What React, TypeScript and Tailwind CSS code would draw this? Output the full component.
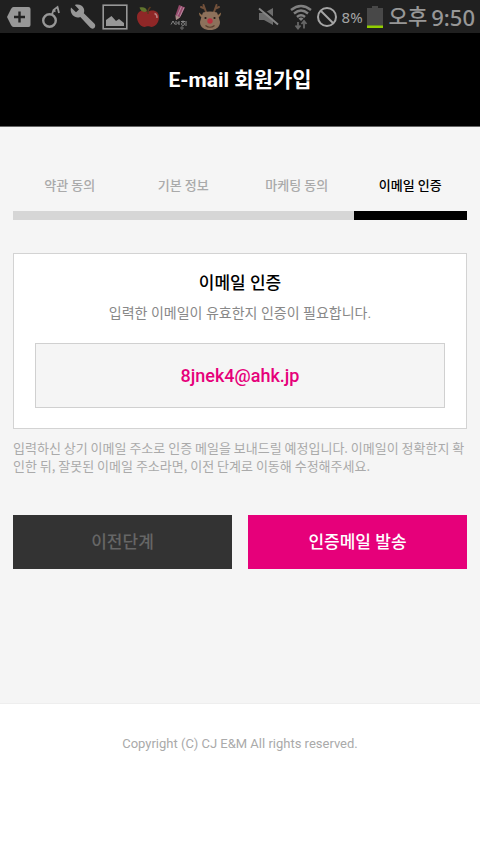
import React from "react";

const steps = [
  { label: "약관 동의", active: false },
  { label: "기본 정보", active: false },
  { label: "마케팅 동의", active: false },
  { label: "이메일 인증", active: true },
];

function NotificationIcons() {
  return (
    <div className="flex items-center">
      <svg className="ml-1.5 shrink-0" width="26" height="24" viewBox="0 0 26 24" aria-hidden="true">
        <path d="M7.5 2h15a2 2 0 0 1 2 2v16a2 2 0 0 1-2 2h-15Q6 22 5 20L1 12 5 4Q6 2 7.5 2z" fill="#979797" />
        <path d="M13.5 6.500v11M8 12h11" stroke="#222" strokeWidth="2.4" />
      </svg>
      <svg className="ml-2 shrink-0" width="22" height="24" viewBox="0 0 22 24" aria-hidden="true">
        <circle cx="9.5" cy="15.5" r="6.3" fill="none" stroke="#979797" strokeWidth="2.4" />
        <path d="M12 9.5l1.500-4.500 4-3 1.500 6M13.500 5.500l2 1" fill="none" stroke="#979797" strokeWidth="1.8" />
      </svg>
      <svg className="ml-2 shrink-0" width="26" height="26" viewBox="0 0 26 26" aria-hidden="true">
        <path d="M1 3.5l5 4.7 3-2.8L4.800 1C8-.1 12.500.8 13.800 4.500c.6 1.700.5 3.300 0 4.700l10.500 10.300c1.300 1.300 1.200 3.200 0 4.400s-3 1-4.200-.3L10.300 13C4.600 15.300-.7 9.700 1 3.500z" fill="#979797" />
      </svg>
      <svg className="ml-1.5 shrink-0" width="26" height="26" viewBox="0 0 26 26" aria-hidden="true">
        <rect x="1.2" y="1.2" width="23.6" height="23.6" fill="none" stroke="#979797" strokeWidth="1.6" />
        <path d="M4 22v-6l5.500-4 4.500 5 3-2 5 4v3z" fill="#979797" />
      </svg>
      <svg className="ml-2 shrink-0" width="24" height="22" viewBox="0 0 24 22" aria-hidden="true">
        <path d="M12 6c4-3 11-1.500 11 5s-4.500 10-7.500 10c-1.500 0-2-.7-3.500-.7s-2 .7-3.500.7C5.500 21 1 17 1 11s6-8.500 11-5z" fill="#8f2727" />
        <path d="M11 5C8 7 4.500 5.500 3.500 1.500 7.500.5 10.500 1.500 11 5z" fill="#60742d" />
        <path d="M12 8Q11.500 3.500 14.500 1" fill="none" stroke="#5a3a20" strokeWidth="1.6" />
        <path d="M18.500 7.500q2.800 1 2.500 4.500" fill="none" stroke="#b98080" strokeWidth="1.500" />
      </svg>
      <svg className="ml-2.5 shrink-0" width="18" height="26" viewBox="0 0 18 26" aria-hidden="true">
        <path d="M9 1l6 2.500-5 10-4 2.500-.5-5z" fill="#94486a" />
        <path d="M11.500 2.500l-4 9M14 3.500l-4 9" stroke="#c2a0b0" strokeWidth=".8" />
        <path d="M5.500 11l4.500 2.500-4 2.500z" fill="#a58f87" />
        <path d="M1 20.500l2-3.500 2 3.500M6 17v4M9 17v4M7 19h2M11 17.500h4M13 16.500v1M16 17v5" fill="none" stroke="#858585" />
        <circle cx="13" cy="20" r="1.500" fill="none" stroke="#858585" strokeWidth=".9" />
        <circle cx="12" cy="24" r="1.200" fill="none" stroke="#858585" strokeWidth=".8" />
      </svg>
      <svg className="ml-2.5 shrink-0" width="24" height="28" viewBox="0 0 24 28" aria-hidden="true">
        <path d="M8 9L5.500 2M6.500 5.500L3 4M16 9l2.500-7M17.500 5.500l3.500-1.500" stroke="#71503a" strokeWidth="2" fill="none" strokeLinecap="round" />
        <path d="M4 12L1 9.500q0 4 3 5zM20 12l3-2.500q0 4-3 5z" fill="#8d6b4b" />
        <path d="M5 9.500Q12 7.500 19 9.500 20.500 13 22 19c0 5.500-4.500 8-10 8S2 24.500 2 19Q3.500 13 5 9.500z" fill="#8d715b" />
        <circle cx="7.500" cy="15" r="1.100" fill="#271d1a" />
        <circle cx="16.500" cy="15" r="1.100" fill="#271d1a" />
        <circle cx="12" cy="18" r="2.700" fill="#b9313f" />
        <path d="M7.500 22.500q4.500 3.500 9 0" stroke="#573e2d" strokeWidth="1.200" fill="none" />
      </svg>
    </div>
  );
}

function SystemIcons() {
  return (
    <div className="flex items-center">
      <svg className="shrink-0" width="22" height="20" viewBox="0 0 22 20" aria-hidden="true">
        <path d="M1 6h5l9-5v17l-9-5H1z" fill="#6c6c6c" />
        <path d="M2.500.5L21.500 16" stroke="#202020" strokeWidth="2" />
        <path d="M1 1.500L20 17.500" stroke="#858585" strokeWidth="2" />
      </svg>
      <svg className="ml-2.5 shrink-0" width="22" height="26" viewBox="0 0 22 26" aria-hidden="true">
        <path d="M1 6q10-8 20 0M4 9.500q7-6 14 0M7 13q4-3.500 8 0" fill="none" stroke="#808080" strokeWidth="2.400" />
        <path d="M8.500 14.500q2.500-2 5 0L11 17z" fill="#808080" />
        <path d="M8 18v6M5.500 21.500L8 24.500l2.500-3M14 24.500v-7M11.500 20l2.500-3 2.500 3" fill="none" stroke="#666" strokeWidth="1.800" />
      </svg>
      <svg className="ml-1 shrink-0" width="22" height="22" viewBox="0 0 22 22" aria-hidden="true">
        <circle cx="11" cy="11" r="9" fill="none" stroke="#a5a5a5" strokeWidth="2" />
        <path d="M4.500 4.500l13 13" stroke="#a5a5a5" strokeWidth="2" />
      </svg>
      <span className="ml-1 font-['Noto_Sans',sans-serif] text-[15px] leading-5 text-[#a5a5a5]">8%</span>
      <svg className="ml-1 shrink-0" width="16" height="24" viewBox="0 0 16 24" aria-hidden="true">
        <path d="M5 1h6v2h5v20H0V3h5z" fill="#484848" />
        <path d="M0 20.500h16V23H0z" fill="#91ce00" />
      </svg>
      <span className="ml-1.5 text-[21px] leading-8 font-medium text-[#979797]">오후</span>
      <span className="ml-1 font-['Noto_Sans',sans-serif] text-[22px] leading-8 font-medium text-[#979797]">9:50</span>
    </div>
  );
}

export default function App() {
  return (
    <div className="flex min-h-screen flex-col bg-[#f5f5f5] font-[Roboto,'Noto_Sans_CJK_KR',sans-serif]">
      <div className="flex h-[33px] items-center justify-between bg-[#202020] pr-[5px] whitespace-nowrap">
        <NotificationIcons />
        <SystemIcons />
      </div>

      <header className="flex h-[94px] items-center justify-center border-b border-[#666] bg-black">
        <h1 className="text-[21px] leading-7 font-bold text-white">E-mail 회원가입</h1>
      </header>

      <main className="flex flex-col px-[13px] pb-[134px]">
        <ol className="mt-[49px] grid grid-cols-4 text-center text-[13px] leading-5">
          {steps.map((step) => (
            <li
              key={step.label}
              aria-current={step.active ? "step" : undefined}
              className={
                step.active
                  ? "border-b-[9px] border-black pb-[15px] font-medium text-black"
                  : "border-b-[9px] border-[#d6d6d6] pb-[15px] font-medium text-[#aaa]"
              }
            >
              {step.label}
            </li>
          ))}
        </ol>

        <section className="mt-[33px] border border-[#d3d3d3] bg-white px-[21px] pt-[17px] pb-5 text-center">
          <h2 className="text-[17px] leading-6 font-medium text-black">이메일 인증</h2>
          <p className="mt-2 text-[14px] leading-5 text-[#888]">입력한 이메일이 유효한지 인증이 필요합니다.</p>
          <div className="mt-5 flex h-[65px] items-center justify-center border border-[#d0d0d0] bg-[#f5f5f5] text-[18px] leading-6 font-medium text-[#e6007a]">
            8jnek4@ahk.jp
          </div>
        </section>

        <p className="mt-2.5 font-['Noto_Sans_CJK_KR',sans-serif] text-[13px] leading-[18px] break-all text-[#aaa]">
          입력하신 상기 이메일 주소로 인증 메일을 보내드릴 예정입니다. 이메일이 정확한지 확인한 뒤, 잘못된 이메일 주소라면, 이전 단계로 이동해 수정해주세요.
        </p>

        <div className="mt-10 grid grid-cols-2 gap-4 text-[17px] leading-6 font-medium">
          <button type="button" className="h-[54px] bg-[#333] text-[#666]">이전단계</button>
          <button type="button" className="h-[54px] bg-[#e6007a] text-white">인증메일 발송</button>
        </div>
      </main>

      <footer className="flex-1 border-t border-[#eee] bg-white pt-[30px] text-center text-[13px] leading-5 text-[#aaa]">
        Copyright (C) CJ E&amp;M All rights reserved.
      </footer>
    </div>
  );
}
